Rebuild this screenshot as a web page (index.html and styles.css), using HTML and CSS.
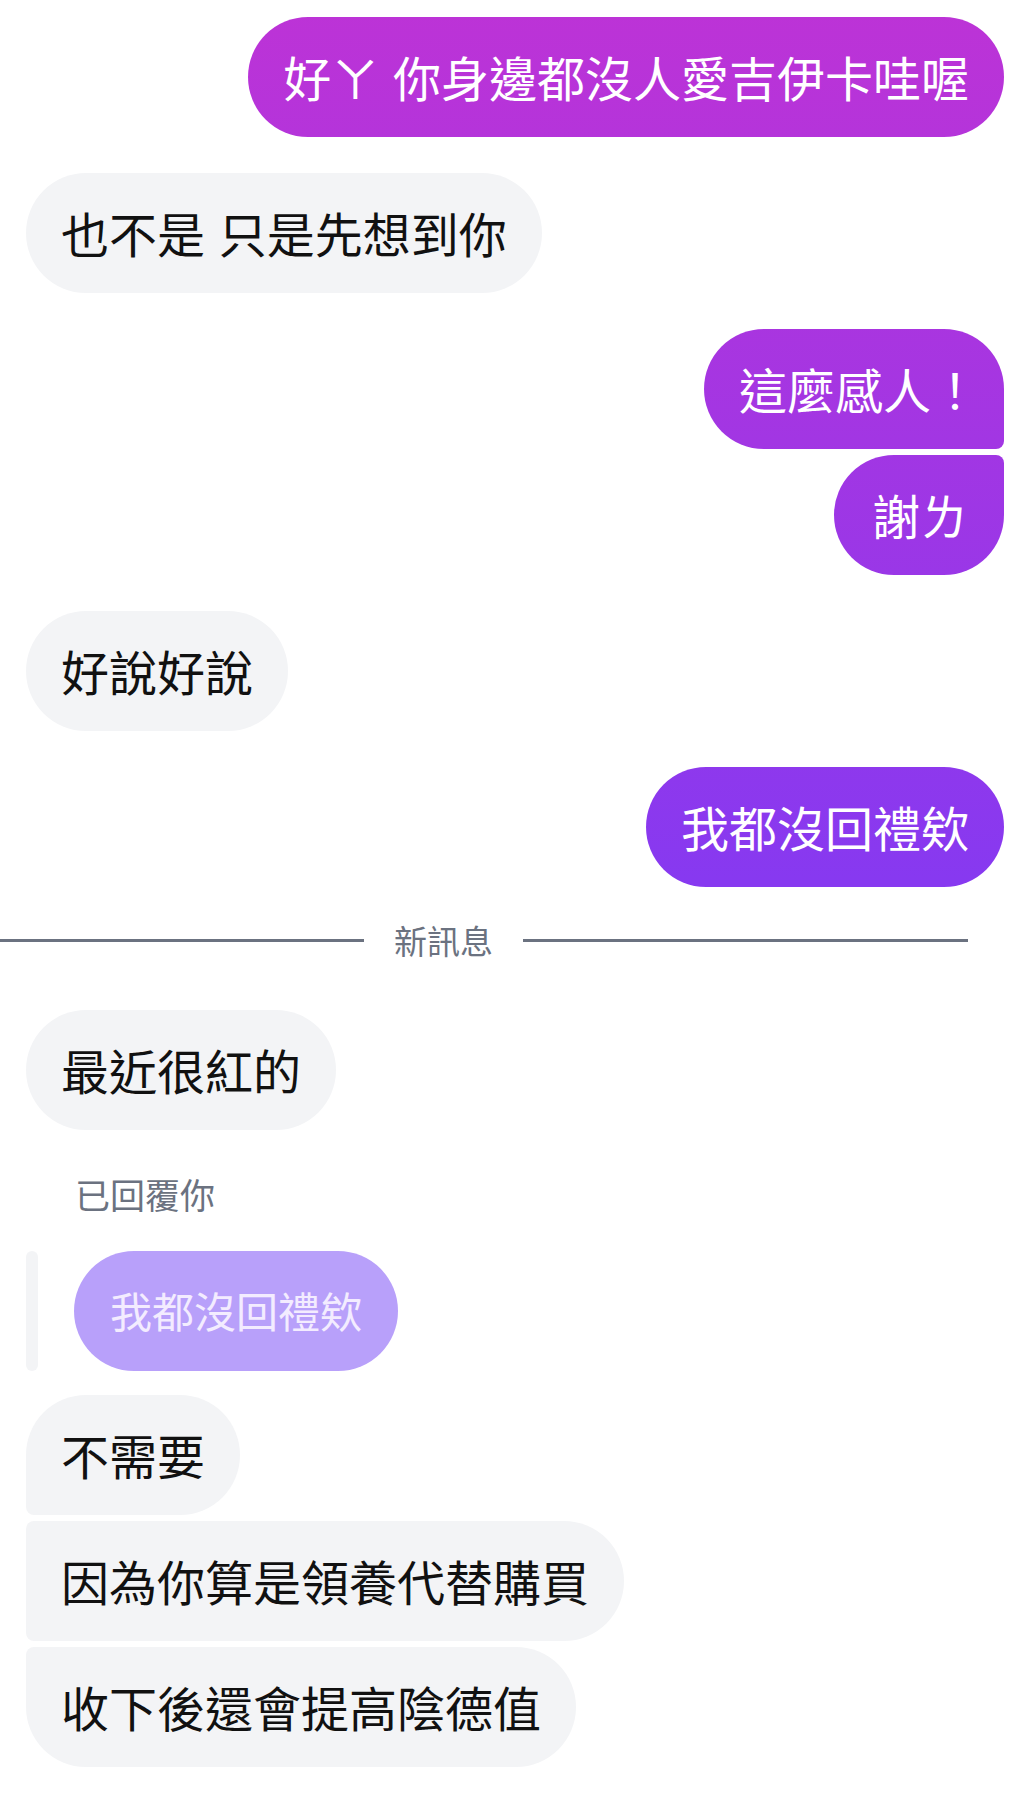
FILE: index.html
```html
<!DOCTYPE html>
<html lang="zh-Hant">
<head>
<meta charset="utf-8">
<title>Chat</title>
<link rel="stylesheet" href="styles.css">
</head>
<body>
<div class="chat">
  <div class="msg me">好ㄚ 你身邊都沒人愛吉伊卡哇喔</div>
  <div class="msg them gap-lg">也不是 只是先想到你</div>
  <div class="msg me gap-lg first-me">這麼感人<span class="bang">！</span></div>
  <div class="msg me gap-sm last-me wide">謝ㄌ</div>
  <div class="msg them gap-lg">好說好說</div>
  <div class="msg me gap-lg">我都沒回禮欸</div>

  <div class="divider">
    <span class="divider-line"></span>
    <span class="divider-text">新訊息</span>
    <span class="divider-line"></span>
  </div>

  <div class="msg them after-divider">最近很紅的</div>

  <div class="reply-label">已回覆你</div>
  <div class="reply-row">
    <span class="reply-bar"></span>
    <div class="reply-bubble">我都沒回禮欸</div>
  </div>

  <div class="msg them after-reply first-them">不需要</div>
  <div class="msg them gap-sm mid-them">因為你算是領養代替購買</div>
  <div class="msg them gap-sm last-them">收下後還會提高陰德值</div>
</div>
</body>
</html>
```
FILE: styles.css
```css
html, body {
  margin: 0;
  padding: 0;
  background: #ffffff;
}

body {
  font-family: "Noto Sans CJK TC", "Noto Sans", sans-serif;
}

.chat {
  display: flex;
  flex-direction: column;
  padding: 17px 24px 42px 26px;
}

.msg {
  font-size: 48px;
  line-height: 72px;
  padding: 23px 35px 25px;
  border-radius: 60px;
  white-space: nowrap;
  word-spacing: 3px;
}

.me {
  align-self: flex-end;
  color: #ffffff;
  background-image: linear-gradient(180deg, #bd33d6 0px, #8739f0 880px, #8739f0 1809px);
  background-attachment: fixed;
}

.them {
  align-self: flex-start;
  color: #111111;
  background: #f3f4f6;
}

.wide { padding-left: 38px; padding-right: 36px; }

.gap-lg { margin-top: 36px; }
.gap-sm { margin-top: 6px; }

.first-me { border-bottom-right-radius: 8px; }
.last-me { border-top-right-radius: 8px; }

.first-them { border-bottom-left-radius: 8px; }
.mid-them { border-top-left-radius: 8px; border-bottom-left-radius: 8px; }
.last-them { border-top-left-radius: 8px; }

.bang {
  display: inline-block;
  width: 38px;
  text-align: right;
}

.divider {
  margin: 29px -24px 0 -26px;
  padding-right: 60px;
  display: grid;
  grid-template-columns: 364px auto 1fr;
  column-gap: 30px;
  align-items: center;
  height: 48px;
}

.divider-line {
  display: block;
  height: 3px;
  background: #6b7280;
}

.divider-text {
  font-size: 33px;
  line-height: 48px;
  color: #6b7280;
}

.after-divider { margin-top: 46px; }

.reply-label {
  margin-top: 36px;
  padding-left: 49px;
  font-size: 35px;
  line-height: 56px;
  color: #6b7280;
}

.reply-row {
  margin-top: 29px;
  display: flex;
  align-items: stretch;
  gap: 36px;
}

.reply-bar {
  width: 12px;
  border-radius: 6px;
  background: #f3f4f6;
}

.reply-bubble {
  font-size: 42px;
  line-height: 72px;
  padding: 23px 36px 25px;
  border-radius: 60px;
  background: #b8a0fa;
  color: #f3ecff;
  white-space: nowrap;
}

.after-reply { margin-top: 24px; }
```
